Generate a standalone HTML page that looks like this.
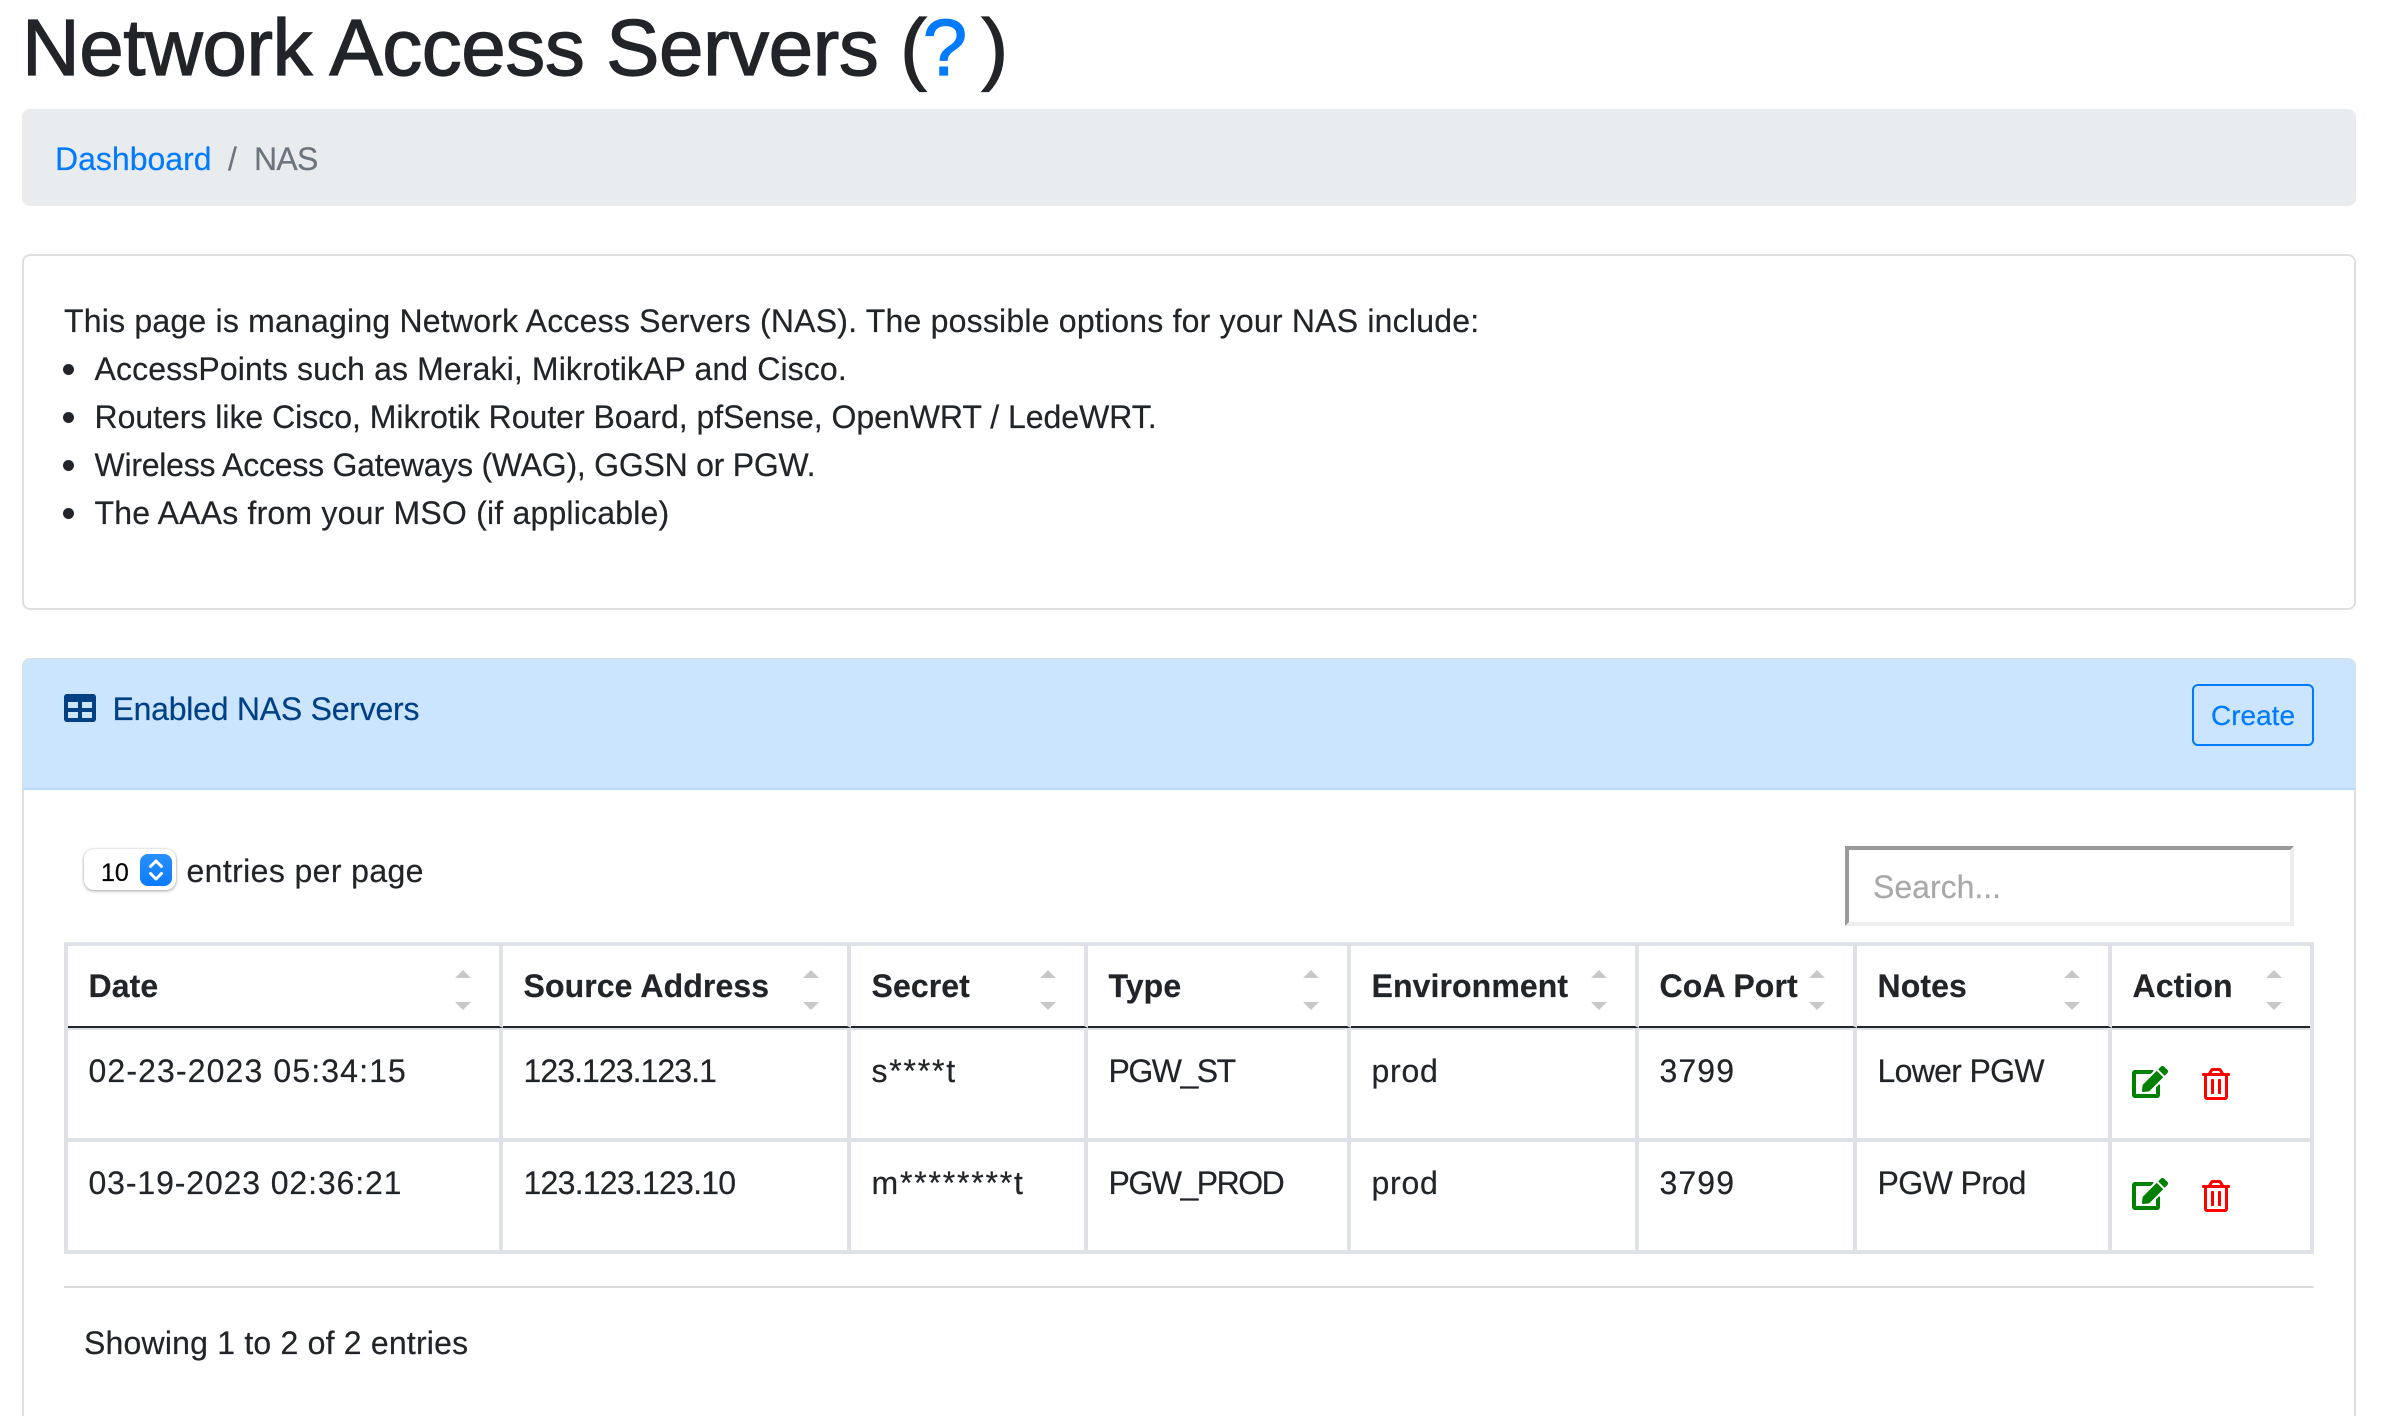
<!DOCTYPE html>
<html lang="en">
<head>
<meta charset="utf-8">
<title>Network Access Servers</title>
<style>
html,body{margin:0;padding:0;background:#fff;width:2388px;height:1416px;overflow:hidden}
body{position:relative;font-family:"Liberation Sans",sans-serif;font-size:32px;line-height:48px;color:#212529;-webkit-text-stroke:.2px}
.a{position:absolute;white-space:nowrap;margin:0}
a{color:#007bff;text-decoration:none}
h1{font-size:80px;line-height:96px;font-weight:400;letter-spacing:-.48px;-webkit-text-stroke:1.2px}
h1 span{letter-spacing:-4px}
.crumb{left:22px;top:109px;width:2334px;height:97px;background:#e9ecef;border-radius:8px}
.card1{left:22px;top:254px;width:2330px;height:352px;border:2px solid #dfdfdf;border-radius:8px;background:#fff}
.card2{left:22px;top:658px;width:2330px;height:800px;border:2px solid #dfdfdf;border-radius:8px;background:#fff}
.head{left:23px;top:659px;width:2332px;height:129px;background:#cce5ff;border-bottom:2px solid #b8daff;border-radius:7px 7px 0 0}
.btn{left:2192px;top:684px;width:118px;height:58px;border:2px solid #007bff;border-radius:6px;color:#007bff;font-size:28px;line-height:60px;text-align:center}
.sel{left:84px;top:849px;width:92px;height:41px;background:#fff;border-radius:10px;box-shadow:0 1px 3px rgba(0,0,0,.35),0 0 1px rgba(0,0,0,.2)}
.selb{left:140px;top:854px;width:32px;height:32px;border-radius:8px;background:linear-gradient(#2a8ffe,#0a7bff)}
.search{left:1845px;top:846px;width:441px;height:72px;border:4px solid;border-color:#9a9a9a #eee #eee #9a9a9a;background:#fff}
table{position:absolute;left:64px;top:942px;width:2250px;border:4px solid #dee2e6;border-collapse:separate;border-spacing:0;table-layout:fixed;box-sizing:border-box}
th,td{box-sizing:border-box;padding:0 0 0 20.5px;vertical-align:top;text-align:left;border-right:4px solid #dee2e6;position:relative;white-space:nowrap}
th:last-child,td:last-child{border-right:0}
th{height:82px;padding-top:16px;border-bottom:2px solid #212529;font-weight:700;letter-spacing:.1px}
.r1 td{height:114px;padding-top:17px;border-top:2px solid #dee2e6;border-bottom:4px solid #dee2e6}
.r2 td{height:108px;padding-top:17px}
.up,.dn{position:absolute;right:28px;width:0;height:0;border-left:8px solid transparent;border-right:8px solid transparent}
.up{top:24px;border-bottom:8px solid #c8c8c8}
.dn{top:56px;border-top:8px solid #c8c8c8}
.ed,.tr{position:absolute}
.ed{left:20px;top:36px;width:36px;height:32px}
.tr{left:90px;top:38px;width:28px;height:32px}
.bul{width:11px;height:11px;border-radius:50%;background:#212529;left:63px}
.hr{left:64px;top:1286px;width:2250px;height:2px;background:#dcdcdc}
</style>
</head>
<body>
<h1 class="a" style="left:22px;top:0">Network Access Servers <span>(<a href="#">?</a> )</span></h1>

<div class="a crumb"></div>
<div class="a" style="left:55px;top:135px"><a href="#">Dashboard</a></div>
<div class="a" style="left:228px;top:135px;color:#6c757d">/</div>
<div class="a" style="left:254px;top:135px;color:#6c757d;letter-spacing:-.7px">NAS</div>

<div class="a card1"></div>
<div class="a" style="left:64px;top:297px;letter-spacing:.21px">This page is managing Network Access Servers (NAS). The possible options for your NAS include:</div>
<div class="a bul" style="top:364px"></div>
<div class="a" style="left:94.5px;top:345px;letter-spacing:.12px">AccessPoints such as Meraki, MikrotikAP and Cisco.</div>
<div class="a bul" style="top:412px"></div>
<div class="a" style="left:94.5px;top:393px;letter-spacing:-.02px">Routers like Cisco, Mikrotik Router Board, pfSense, OpenWRT / LedeWRT.</div>
<div class="a bul" style="top:460px"></div>
<div class="a" style="left:94.5px;top:441px;letter-spacing:-.24px">Wireless Access Gateways (WAG), GGSN or PGW.</div>
<div class="a bul" style="top:508px"></div>
<div class="a" style="left:94.5px;top:489px;letter-spacing:.2px">The AAAs from your MSO (if applicable)</div>

<div class="a card2"></div>
<div class="a head"></div>
<svg class="a" style="left:64px;top:692px" width="32" height="32" viewBox="0 0 512 512"><path fill="#004085" d="M464 32H48C21.49 32 0 53.49 0 80v352c0 26.51 21.49 48 48 48h416c26.51 0 48-21.49 48-48V80c0-26.51-21.49-48-48-48zM224 416H64v-96h160v96zm0-160H64v-96h160v96zm224 160H288v-96h160v96zm0-160H288v-96h160v96z"/></svg>
<div class="a" style="left:112.5px;top:685px;color:#004085;letter-spacing:-.24px">Enabled NAS Servers</div>
<div class="a btn">Create</div>

<div class="a sel"></div>
<div class="a" style="left:101px;top:849px;font-size:25px;color:#000">10</div>
<div class="a selb"></div>
<svg class="a" style="left:140px;top:854px" width="32" height="32" viewBox="0 0 32 32"><path fill="none" stroke="#fff" stroke-width="3" stroke-linecap="round" stroke-linejoin="round" d="M10.5 12.5l5.5-5.5 5.5 5.5M10.5 19.5l5.5 5.5 5.5-5.5"/></svg>
<div class="a" style="left:186.5px;top:847px;letter-spacing:.38px">entries per page</div>

<div class="a search"></div>
<div class="a" style="left:1873px;top:863px;color:#a9a9a9">Search...</div>

<table>
<colgroup><col style="width:435px"><col style="width:348px"><col style="width:237px"><col style="width:263px"><col style="width:288px"><col style="width:218px"><col style="width:255px"><col style="width:198px"></colgroup>
<thead><tr>
<th>Date<i class="up"></i><i class="dn"></i></th>
<th>Source Address<i class="up"></i><i class="dn"></i></th>
<th>Secret<i class="up"></i><i class="dn"></i></th>
<th>Type<i class="up"></i><i class="dn"></i></th>
<th>Environment<i class="up"></i><i class="dn"></i></th>
<th>CoA Port<i class="up"></i><i class="dn"></i></th>
<th>Notes<i class="up"></i><i class="dn"></i></th>
<th>Action<i class="up"></i><i class="dn"></i></th>
</tr></thead>
<tbody>
<tr class="r1">
<td style="letter-spacing:1.12px">02-23-2023 05:34:15</td><td style="letter-spacing:-.94px">123.123.123.1</td><td style="letter-spacing:1.8px">s****t</td><td style="letter-spacing:-1.5px">PGW_ST</td><td style="letter-spacing:.76px">prod</td><td style="letter-spacing:1.1px">3799</td><td style="letter-spacing:-.68px">Lower PGW</td>
<td><svg class="ed" viewBox="0 0 576 512"><path fill="#008000" d="M402.6 83.2l90.2 90.2c3.8 3.8 3.8 10 0 13.8L274.4 405.6l-92.8 10.3c-12.4 1.4-22.9-9.1-21.5-21.5l10.3-92.8L388.8 83.2c3.8-3.8 10-3.8 13.8 0zm162-22.9l-48.8-48.8c-15.2-15.2-39.9-15.2-55.2 0l-35.4 35.4c-3.8 3.8-3.8 10 0 13.8l90.2 90.2c3.8 3.8 10 3.8 13.8 0l35.4-35.4c15.2-15.3 15.2-40 0-55.2zM384 346.2V448H64V128h229.8c3.2 0 6.2-1.3 8.5-3.5l40-40c7.6-7.6 2.2-20.5-8.5-20.5H48C21.5 64 0 85.5 0 112v352c0 26.5 21.5 48 48 48h352c26.5 0 48-21.5 48-48V306.2c0-10.7-12.9-16-20.5-8.5l-40 40c-2.2 2.3-3.5 5.3-3.5 8.5z"/></svg><svg class="tr" viewBox="0 0 448 512"><path fill="#f00" d="M268 416h24a12 12 0 0 0 12-12V188a12 12 0 0 0-12-12h-24a12 12 0 0 0-12 12v216a12 12 0 0 0 12 12zM432 80h-82.41l-34-56.7A48 48 0 0 0 274.41 0H173.59a48 48 0 0 0-41.16 23.3L98.41 80H16A16 16 0 0 0 0 96v16a16 16 0 0 0 16 16h16v336a48 48 0 0 0 48 48h288a48 48 0 0 0 48-48V128h16a16 16 0 0 0 16-16V96a16 16 0 0 0-16-16zM171.84 50.91A6 6 0 0 1 177 48h94a6 6 0 0 1 5.15 2.91L293.61 80H154.39zM368 464H80V128h288zm-212-48h24a12 12 0 0 0 12-12V188a12 12 0 0 0-12-12h-24a12 12 0 0 0-12 12v216a12 12 0 0 0 12 12z"/></svg></td>
</tr>
<tr class="r2">
<td style="letter-spacing:.88px">03-19-2023 02:36:21</td><td style="letter-spacing:-.76px">123.123.123.10</td><td style="letter-spacing:1.8px">m********t</td><td style="letter-spacing:-1.5px">PGW_PROD</td><td style="letter-spacing:.76px">prod</td><td style="letter-spacing:1.1px">3799</td><td style="letter-spacing:-.57px">PGW Prod</td>
<td><svg class="ed" viewBox="0 0 576 512"><path fill="#008000" d="M402.6 83.2l90.2 90.2c3.8 3.8 3.8 10 0 13.8L274.4 405.6l-92.8 10.3c-12.4 1.4-22.9-9.1-21.5-21.5l10.3-92.8L388.8 83.2c3.8-3.8 10-3.8 13.8 0zm162-22.9l-48.8-48.8c-15.2-15.2-39.9-15.2-55.2 0l-35.4 35.4c-3.8 3.8-3.8 10 0 13.8l90.2 90.2c3.8 3.8 10 3.8 13.8 0l35.4-35.4c15.2-15.3 15.2-40 0-55.2zM384 346.2V448H64V128h229.8c3.2 0 6.2-1.3 8.5-3.5l40-40c7.6-7.6 2.2-20.5-8.5-20.5H48C21.5 64 0 85.5 0 112v352c0 26.5 21.5 48 48 48h352c26.5 0 48-21.5 48-48V306.2c0-10.7-12.9-16-20.5-8.5l-40 40c-2.2 2.3-3.5 5.3-3.5 8.5z"/></svg><svg class="tr" viewBox="0 0 448 512"><path fill="#f00" d="M268 416h24a12 12 0 0 0 12-12V188a12 12 0 0 0-12-12h-24a12 12 0 0 0-12 12v216a12 12 0 0 0 12 12zM432 80h-82.41l-34-56.7A48 48 0 0 0 274.41 0H173.59a48 48 0 0 0-41.16 23.3L98.41 80H16A16 16 0 0 0 0 96v16a16 16 0 0 0 16 16h16v336a48 48 0 0 0 48 48h288a48 48 0 0 0 48-48V128h16a16 16 0 0 0 16-16V96a16 16 0 0 0-16-16zM171.84 50.91A6 6 0 0 1 177 48h94a6 6 0 0 1 5.15 2.91L293.61 80H154.39zM368 464H80V128h288zm-212-48h24a12 12 0 0 0 12-12V188a12 12 0 0 0-12-12h-24a12 12 0 0 0-12 12v216a12 12 0 0 0 12 12z"/></svg></td>
</tr>
</tbody>
</table>

<div class="a hr"></div>
<div class="a" style="left:84px;top:1319px;letter-spacing:.2px">Showing 1 to 2 of 2 entries</div>
</body>
</html>
